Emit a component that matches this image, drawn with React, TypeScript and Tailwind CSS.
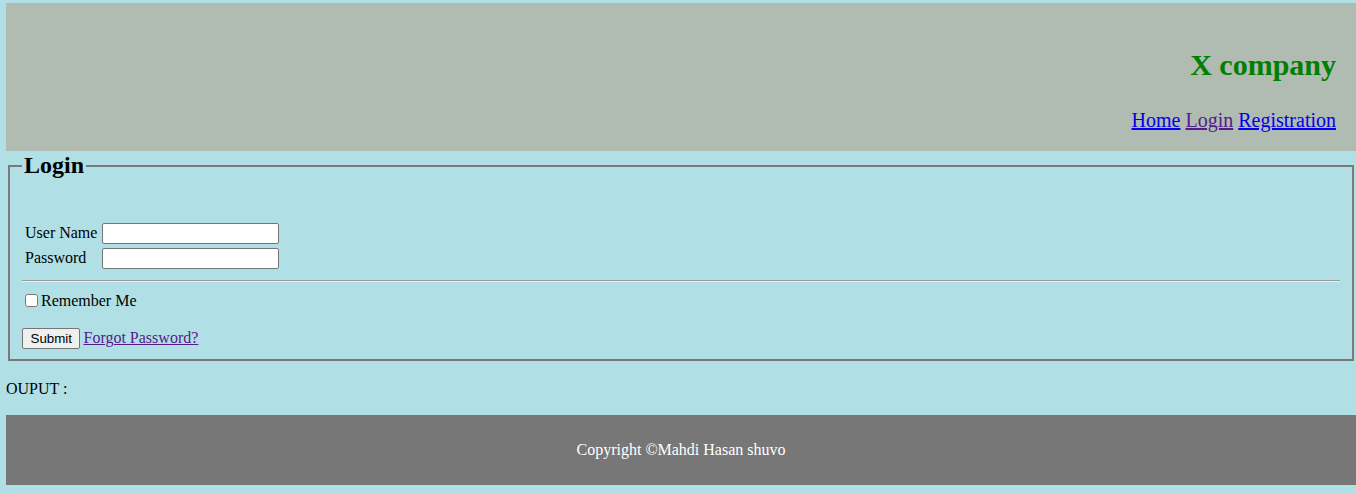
import * as React from "react";

export default function App() {
  return (
    <div className="min-h-[493px] bg-[#b0e0e6] pl-[6px] pt-[3px] font-['Liberation_Serif',serif] text-[16px] leading-[1.15] text-black">
      {/* header */}
      <header className="h-[148px] bg-[#b0bbb2] pr-[20px] text-right">
        <h1 className="pt-[45px] text-[30px] font-bold leading-[34px] text-[#008000]">X company</h1>
        <nav className="mt-[27px] text-[20px] leading-[23px]">
          <a href="#" className="text-[#0000ee] underline">Home</a>{" "}
          <a href="#" className="text-[#551a8b] underline">Login</a>{" "}
          <a href="#" className="text-[#0000ee] underline">Registration</a>
        </nav>
      </header>

      {/* login form */}
      <fieldset className="mx-[2px] mt-px border-2 border-[#7a7a7a] px-[12px] pb-[10px]">
        <legend className="px-[2px] text-[24px] font-bold leading-[27px]">Login</legend>
        <div className="mt-[44px] flex flex-col gap-[4px] pb-[3px] pl-[3px]">
          <div className="flex h-[21px] items-center">
            <label className="w-[77px]">User Name</label>
            <input type="text" className="h-[21px] w-[177px] rounded-[2px] border border-[#767676] bg-white" />
          </div>
          <div className="flex h-[21px] items-center">
            <label className="w-[77px]">Password</label>
            <input type="password" className="h-[21px] w-[177px] rounded-[2px] border border-[#767676] bg-white" />
          </div>
        </div>
        <hr className="mt-[8px] mb-[9px] border-t border-b border-t-[#9a9a9a] border-b-[#eeeeee]" />
        <div className="flex items-center leading-[18px]">
          <input type="checkbox" className="my-[3px] ml-[3px] mr-[3px] h-[13px] w-[13px]" />
          <span>Remember Me</span>
        </div>
        <div className="mt-[18px] flex items-center gap-[3px]">
          <button className="h-[21px] rounded-[2px] border border-[#767676] bg-[#efefef] px-[7.5px] font-['Liberation_Sans',sans-serif] text-[13.33px] leading-none">
            Submit
          </button>
          <a href="#" className="text-[#551a8b] underline">Forgot Password?</a>
        </div>
      </fieldset>

      <p className="mt-[19px] leading-[18px]">OUPUT :</p>

      {/* footer */}
      <footer className="mt-[17px] flex h-[70px] items-center justify-center bg-[#777777] text-white">
        Copyright ©Mahdi Hasan shuvo
      </footer>
    </div>
  );
}
